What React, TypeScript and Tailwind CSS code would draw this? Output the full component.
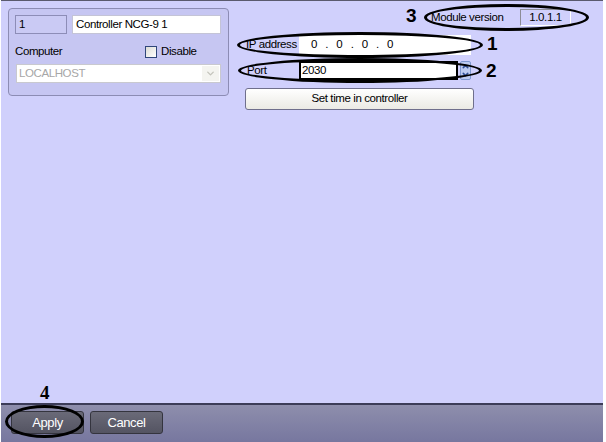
import { ChevronDown, ChevronUp } from 'lucide-react';

const font = { fontFamily: '"Liberation Sans", Arial, sans-serif' };

function Ellipse({ className }: { className: string }) {
  return (
    <div
      className={`absolute rounded-[50%] border-[3px] border-black pointer-events-none ${className}`}
    />
  );
}

function Mark({ n, className }: { n: string; className: string }) {
  return (
    <span className={`absolute text-[19px] font-bold leading-none text-black ${className}`}>
      {n}
    </span>
  );
}

export default function App() {
  return (
    <div
      className="relative w-[606px] h-[442px] flex flex-col bg-white text-[11.5px] tracking-[-0.4px] text-black overflow-hidden whitespace-nowrap"
      style={font}
    >
      <div className="flex-1 flex flex-col ml-[1px] mr-[3px] bg-[#d0d0fc] border-t border-[#5a5a6e]">
        <div className="flex gap-4 pl-[7px] pt-[7px]">
          {/* controller panel */}
          <div className="w-[221px] h-[88px] rounded-[4px] border border-[#8c8cb4] bg-[#c6c6f2] px-[6px] pt-[6px] flex flex-col">
            <div className="flex gap-[5px]">
              <div className="w-[52px] h-[19px] border border-[#8d8db7] bg-[#cacaf4] px-[3px] leading-[17px]">
                1
              </div>
              <div className="w-[149px] h-[19px] border border-[#c4c4d6] bg-white px-[3px] leading-[17px]">
                Controller NCG-9 1
              </div>
            </div>
            <div className="flex items-center mt-[11px] h-[13px]">
              <span className="w-[130px]">Computer</span>
              <span className="w-[12px] h-[12px] border border-[#30467a] bg-gradient-to-br from-[#dcdcd6] to-white" />
              <span className="ml-[4px]">Disable</span>
            </div>
            <div className="mt-[6px] ml-[1px] w-[205px] h-[19px] border border-[#c9c9cf] bg-white flex items-stretch">
              <span className="flex-1 px-[2px] leading-[17px] text-[#a7a7a7]">LOCALHOST</span>
              <span className="w-[17px] m-[1px] bg-[#f4f4f0] flex items-center justify-center">
                <ChevronDown size={11} strokeWidth={3} className="text-[#c4c4bc]" />
              </span>
            </div>
          </div>

          {/* connection settings */}
          <div className="flex flex-col pt-[27px] w-[230px]">
            <div className="flex items-center h-[20px]">
              <span className="w-[54px] pl-[1px]">IP address</span>
              <div className="w-[172px] h-[20px] bg-white flex items-center pl-[12px] tracking-[0.5px]">
                0&nbsp;&nbsp;.&nbsp;&nbsp;0&nbsp;&nbsp;.&nbsp;&nbsp;0&nbsp;&nbsp;.&nbsp;&nbsp;0
              </div>
            </div>
            <div className="flex items-center h-[19px] mt-[6px]">
              <span className="w-[54px] pl-[2px]">Port</span>
              <div className="w-[159px] h-[19px] border-2 border-black bg-white leading-[14px] px-[1px]">
                2030
              </div>
              <div className="ml-[2px] w-[11px] h-[19px] rounded-[2px] bg-[#bccbf0] border border-[#7e98d0] flex flex-col items-center justify-center">
                <ChevronUp size={9} strokeWidth={4} className="text-[#2f4f94] -mb-[1px]" />
                <ChevronDown size={9} strokeWidth={4} className="text-[#2f4f94]" />
              </div>
            </div>
            <button className="mt-[8px] w-[229px] h-[22px] rounded-[3px] border border-[#6f6f8c] bg-gradient-to-b from-white to-[#ebeae4] text-black">
              Set time in controller
            </button>
          </div>
        </div>

        {/* module version */}
        <div className="absolute left-[431px] top-[9px] flex items-center">
          <span className="w-[89px]">Module version</span>
          <div className="w-[51px] h-[17px] border border-t-[#8c8c96] border-l-[#8c8c96] border-r-white border-b-white text-center leading-[15px]">
            1.0.1.1
          </div>
        </div>
      </div>

      {/* bottom bar */}
      <div className="h-[39px] ml-[1px] mr-[3px] border-t-2 border-[#3c3c58] bg-gradient-to-b from-[#8e8eac] to-[#77779f] flex items-center gap-[6px] pl-[10px] pb-[2px]">
        <button className="w-[73px] h-[23px] rounded-[3px] border border-[#34343e] bg-gradient-to-b from-[#6a6a78] to-[#545462] text-white text-[13px]">
          Apply
        </button>
        <button className="w-[73px] h-[23px] rounded-[3px] border border-[#34343e] bg-gradient-to-b from-[#6a6a78] to-[#545462] text-white text-[13px]">
          Cancel
        </button>
      </div>

      {/* annotations */}
      <Ellipse className="left-[424px] top-[4px] w-[165px] h-[27px]" />
      <Ellipse className="left-[237px] top-[32px] w-[246px] h-[26px]" />
      <Ellipse className="left-[238px] top-[58px] w-[244px] h-[25px]" />
      <Ellipse className="left-[5px] top-[405px] w-[79px] h-[33px]" />
      <Mark n="3" className="left-[406px] top-[6px]" />
      <Mark n="1" className="left-[487px] top-[34px]" />
      <Mark n="2" className="left-[486px] top-[61px]" />
      <span
        className="absolute left-[40px] top-[383px] text-[19px] font-bold leading-none"
        style={{ fontFamily: '"Liberation Serif", serif' }}
      >
        4
      </span>
    </div>
  );
}
